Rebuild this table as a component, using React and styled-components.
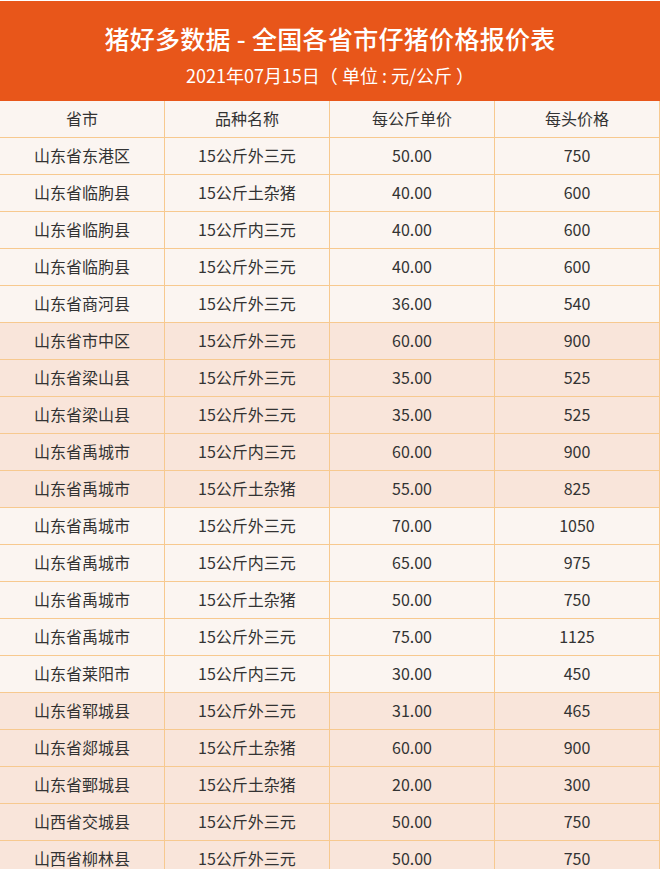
import React from "react";
import styled, { createGlobalStyle } from "styled-components";

const GlobalStyle = createGlobalStyle`
  html, body { margin: 0; padding: 0; background: #ffffff; }
  body { font-family: "Noto Sans CJK SC", "Noto Sans", sans-serif; }
`;

const rows = [
  ["山东省东港区", "15公斤外三元", "50.00", "750"],
  ["山东省临朐县", "15公斤土杂猪", "40.00", "600"],
  ["山东省临朐县", "15公斤内三元", "40.00", "600"],
  ["山东省临朐县", "15公斤外三元", "40.00", "600"],
  ["山东省商河县", "15公斤外三元", "36.00", "540"],
  ["山东省市中区", "15公斤外三元", "60.00", "900"],
  ["山东省梁山县", "15公斤外三元", "35.00", "525"],
  ["山东省梁山县", "15公斤外三元", "35.00", "525"],
  ["山东省禹城市", "15公斤内三元", "60.00", "900"],
  ["山东省禹城市", "15公斤土杂猪", "55.00", "825"],
  ["山东省禹城市", "15公斤外三元", "70.00", "1050"],
  ["山东省禹城市", "15公斤内三元", "65.00", "975"],
  ["山东省禹城市", "15公斤土杂猪", "50.00", "750"],
  ["山东省禹城市", "15公斤外三元", "75.00", "1125"],
  ["山东省莱阳市", "15公斤内三元", "30.00", "450"],
  ["山东省郓城县", "15公斤外三元", "31.00", "465"],
  ["山东省郯城县", "15公斤土杂猪", "60.00", "900"],
  ["山东省鄄城县", "15公斤土杂猪", "20.00", "300"],
  ["山西省交城县", "15公斤外三元", "50.00", "750"],
  ["山西省柳林县", "15公斤外三元", "50.00", "750"],
];

const Page = styled.div`
  width: 660px;
  overflow: hidden;
`;

const Banner = styled.div`
  background: #e8561a;
  height: 100px;
  margin-top: 1px;
  display: flex;
  flex-direction: column;
  align-items: center;
  color: #fff;
`;

const Title = styled.h1`
  margin: 19px 0 0;
  font-size: 25px;
  line-height: 36px;
  font-weight: 500;
  letter-spacing: 0.3px;
`;

const Subtitle = styled.div`
  margin-top: 6px;
  font-size: 18px;
  line-height: 26px;
`;

const Table = styled.div``;

const Row = styled.div`
  display: grid;
  grid-template-columns: 165px 165px 165px 165px;
  height: 37px;
  background: ${(p) => (p.$shade ? "#f9e5da" : "#fbf5f1")};
`;

const Cell = styled.div`
  display: flex;
  align-items: center;
  justify-content: center;
  padding-bottom: 2px;
  border-right: 1px solid #f7c98f;
  border-bottom: 1px solid #f7c98f;
  font-size: 16px;
  color: #333;
`;

export default function App() {
  return (
    <Page>
      <GlobalStyle />
      <Banner>
        <Title>猪好多数据 - 全国各省市仔猪价格报价表</Title>
        <Subtitle>2021年07月15日（ 单位 : 元/公斤 ）</Subtitle>
      </Banner>
      <Table>
        <Row>
          <Cell>省市</Cell>
          <Cell>品种名称</Cell>
          <Cell>每公斤单价</Cell>
          <Cell>每头价格</Cell>
        </Row>
        {rows.map((r, i) => (
          <Row key={i} $shade={Math.floor(i / 5) % 2 === 1}>
            {r.map((c, j) => (
              <Cell key={j}>{c}</Cell>
            ))}
          </Row>
        ))}
      </Table>
    </Page>
  );
}
